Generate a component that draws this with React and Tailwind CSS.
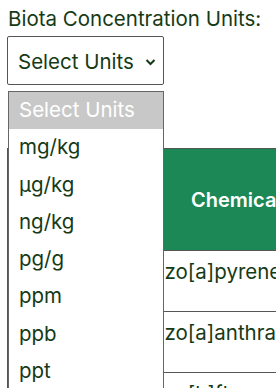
import React from 'react';

const units = ['mg/kg', 'µg/kg', 'ng/kg', 'pg/g', 'ppm', 'ppb', 'ppt', 'ppq'];

const rows = ['Benzo[a]pyrene', 'Benzo[a]anthracene', 'Benzo[b]fluoranthene'];

export default function App() {
  return (
    <div
      className="relative w-[276px] h-[388px] overflow-hidden bg-white text-[#163a16]"
      style={{ fontFamily: 'Inter, "Liberation Sans", sans-serif' }}
    >
      <div className="pl-2 pt-[6px]">
        <label className="block text-[20.5px] leading-[25px]">Biota Concentration Units:</label>
        <div className="mt-[5px] ml-[-1px] w-[157px] h-[49px] border border-[#555] rounded-[2px] flex items-center justify-between pl-[10px] pr-[7px]">
          <span className="text-[20.5px] leading-[25px] mt-[2px]">Select Units</span>
          <svg width="11" height="8" viewBox="0 0 11 8" className="mt-[3px]">
            <path d="M1.5 2 L5.5 6 L9.5 2" fill="none" stroke="#163a16" strokeWidth="2" />
          </svg>
        </div>

        <div className="mt-[63px] ml-[-1px] w-[520px]">
          <table className="border-collapse table-fixed">
            <thead>
              <tr className="bg-[#1b8856] text-white h-[102px]">
                <th className="w-[109px] border border-[#555]"></th>
                <th className="w-[260px] border border-[#555] text-left pl-[74px] font-semibold text-[20px]">Chemical</th>
                <th className="w-[140px] border border-[#555]"></th>
              </tr>
            </thead>
            <tbody>
              {rows.map((r) => (
                <tr key={r} className="h-[61px]">
                  <td className="border border-[#555]"></td>
                  <td className="border border-[#555] align-top pt-[6px] pl-[10px] text-[20.5px] whitespace-nowrap overflow-hidden">{r}</td>
                  <td className="border border-[#555]"></td>
                </tr>
              ))}
            </tbody>
          </table>
        </div>
      </div>

      <div className="absolute left-[8px] top-[91px] w-[156px] bg-white border border-[#666]">
        <div className="h-[37px] bg-[#c8c8c8] text-white text-[20.5px] flex items-center pl-[10px]">Select Units</div>
        {units.map((u) => (
          <div key={u} className="h-[37.3px] text-[20.5px] flex items-center pl-[10px]">{u}</div>
        ))}
      </div>
    </div>
  );
}
